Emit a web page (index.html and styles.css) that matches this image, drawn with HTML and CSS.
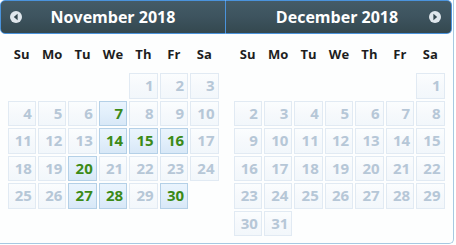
FILE: index.html
```html
<!DOCTYPE html>
<html lang="en">
<head>
    <meta charset="UTF-8">
    <title>Datepicker</title>
    <link rel="stylesheet" href="styles.css">
</head>
<body>
    <div class="datepicker">
        <!-- November -->
        <div class="group group-first">
            <div class="header">
                <span class="nav nav-prev">
                    <svg width="12" height="12" viewBox="0 0 12 12"><circle cx="6" cy="6" r="6" fill="#dfe6ec"/><path d="M7.6 2.8 L3.8 6 L7.6 9.2 Z" fill="#34474f"/></svg>
                </span>
                <span class="title">November 2018</span>
            </div>
            <table class="calendar">
                <thead>
                    <tr><th>Su</th><th>Mo</th><th>Tu</th><th>We</th><th>Th</th><th>Fr</th><th>Sa</th></tr>
                </thead>
                <tbody>
                    <tr><td></td><td></td><td></td><td></td><td><span class="day">1</span></td><td><span class="day">2</span></td><td><span class="day">3</span></td></tr>
                    <tr><td><span class="day">4</span></td><td><span class="day">5</span></td><td><span class="day">6</span></td><td><span class="day on">7</span></td><td><span class="day">8</span></td><td><span class="day">9</span></td><td><span class="day">10</span></td></tr>
                    <tr><td><span class="day">11</span></td><td><span class="day">12</span></td><td><span class="day">13</span></td><td><span class="day on">14</span></td><td><span class="day on">15</span></td><td><span class="day on">16</span></td><td><span class="day">17</span></td></tr>
                    <tr><td><span class="day">18</span></td><td><span class="day">19</span></td><td><span class="day on">20</span></td><td><span class="day">21</span></td><td><span class="day">22</span></td><td><span class="day">23</span></td><td><span class="day">24</span></td></tr>
                    <tr><td><span class="day">25</span></td><td><span class="day">26</span></td><td><span class="day on">27</span></td><td><span class="day on">28</span></td><td><span class="day">29</span></td><td><span class="day on">30</span></td><td></td></tr>
                </tbody>
            </table>
        </div>

        <!-- December -->
        <div class="group group-last">
            <div class="header">
                <span class="title">December 2018</span>
                <span class="nav nav-next">
                    <svg width="12" height="12" viewBox="0 0 12 12"><circle cx="6" cy="6" r="6" fill="#dfe6ec"/><path d="M4.4 2.8 L8.2 6 L4.4 9.2 Z" fill="#34474f"/></svg>
                </span>
            </div>
            <table class="calendar">
                <thead>
                    <tr><th>Su</th><th>Mo</th><th>Tu</th><th>We</th><th>Th</th><th>Fr</th><th>Sa</th></tr>
                </thead>
                <tbody>
                    <tr><td></td><td></td><td></td><td></td><td></td><td></td><td><span class="day">1</span></td></tr>
                    <tr><td><span class="day">2</span></td><td><span class="day">3</span></td><td><span class="day">4</span></td><td><span class="day">5</span></td><td><span class="day">6</span></td><td><span class="day">7</span></td><td><span class="day">8</span></td></tr>
                    <tr><td><span class="day">9</span></td><td><span class="day">10</span></td><td><span class="day">11</span></td><td><span class="day">12</span></td><td><span class="day">13</span></td><td><span class="day">14</span></td><td><span class="day">15</span></td></tr>
                    <tr><td><span class="day">16</span></td><td><span class="day">17</span></td><td><span class="day">18</span></td><td><span class="day">19</span></td><td><span class="day">20</span></td><td><span class="day">21</span></td><td><span class="day">22</span></td></tr>
                    <tr><td><span class="day">23</span></td><td><span class="day">24</span></td><td><span class="day">25</span></td><td><span class="day">26</span></td><td><span class="day">27</span></td><td><span class="day">28</span></td><td><span class="day">29</span></td></tr>
                    <tr><td><span class="day">30</span></td><td><span class="day">31</span></td><td></td><td></td><td></td><td></td><td></td></tr>
                </tbody>
            </table>
        </div>
    </div>
</body>
</html>
```

FILE: styles.css
```css
/* General */
body {
    margin: 0;
    font-family: "Open Sans", "DejaVu Sans", sans-serif;
    background: #ffffff;
}

/* Widget frame */
.datepicker {
    display: flex;
    width: 452px;
    height: 243px;
    padding-right: 1px;
    background: #fdfefe;
    border-right: 1px solid #a6c9e2;
    border-bottom: 1px solid #a6c9e2;
    border-bottom-right-radius: 5px;
}

.group {
    width: 226px;
}

/* Month header */
.header {
    position: relative;
    display: flex;
    align-items: center;
    justify-content: center;
    height: 32px;
    border: 1px solid #4a93dc;
    background: linear-gradient(#445b67 0%, #3d535e 50%, #34484f 100%);
    color: #ffffff;
}

.group-first .header {
    border-radius: 5px 0 0 5px;
}

.group-last .header {
    border-left-width: 0;
    border-radius: 0 5px 5px 0;
}

.title {
    font-size: 16px;
    font-weight: bold;
    line-height: 20px;
}

.group-last .title {
    margin-left: -3px;
}

.nav {
    position: absolute;
    top: 10px;
    width: 12px;
    height: 12px;
}

.nav svg {
    display: block;
}

.nav-prev {
    left: 9px;
}

.nav-next {
    right: 10px;
}

/* Calendar table */
.calendar {
    width: 213px;
    margin: 2px auto 5px;
    border-collapse: separate;
    border-spacing: 0;
    table-layout: fixed;
}

.calendar th {
    height: 36px;
    padding: 0;
    font-size: 13px;
    font-weight: bold;
    color: #1e1e1e;
    text-align: center;
}

.calendar td {
    padding: 1px;
}

.day {
    display: block;
    height: 23.5px;
    padding-right: 3px;
    border: 1px solid #e1eaf3;
    background: linear-gradient(#fbfdfe 0%, #f6f9fc 50%, #f2f7fb 100%);
    color: #b6c7d7;
    font-size: 15px;
    font-weight: bold;
    line-height: 23.5px;
    text-align: right;
}

.day.on {
    border-color: #b4d0e7;
    background: linear-gradient(#eaf4fd 0%, #e2effb 50%, #d8e8f7 100%);
    color: #3b8a17;
}
```
